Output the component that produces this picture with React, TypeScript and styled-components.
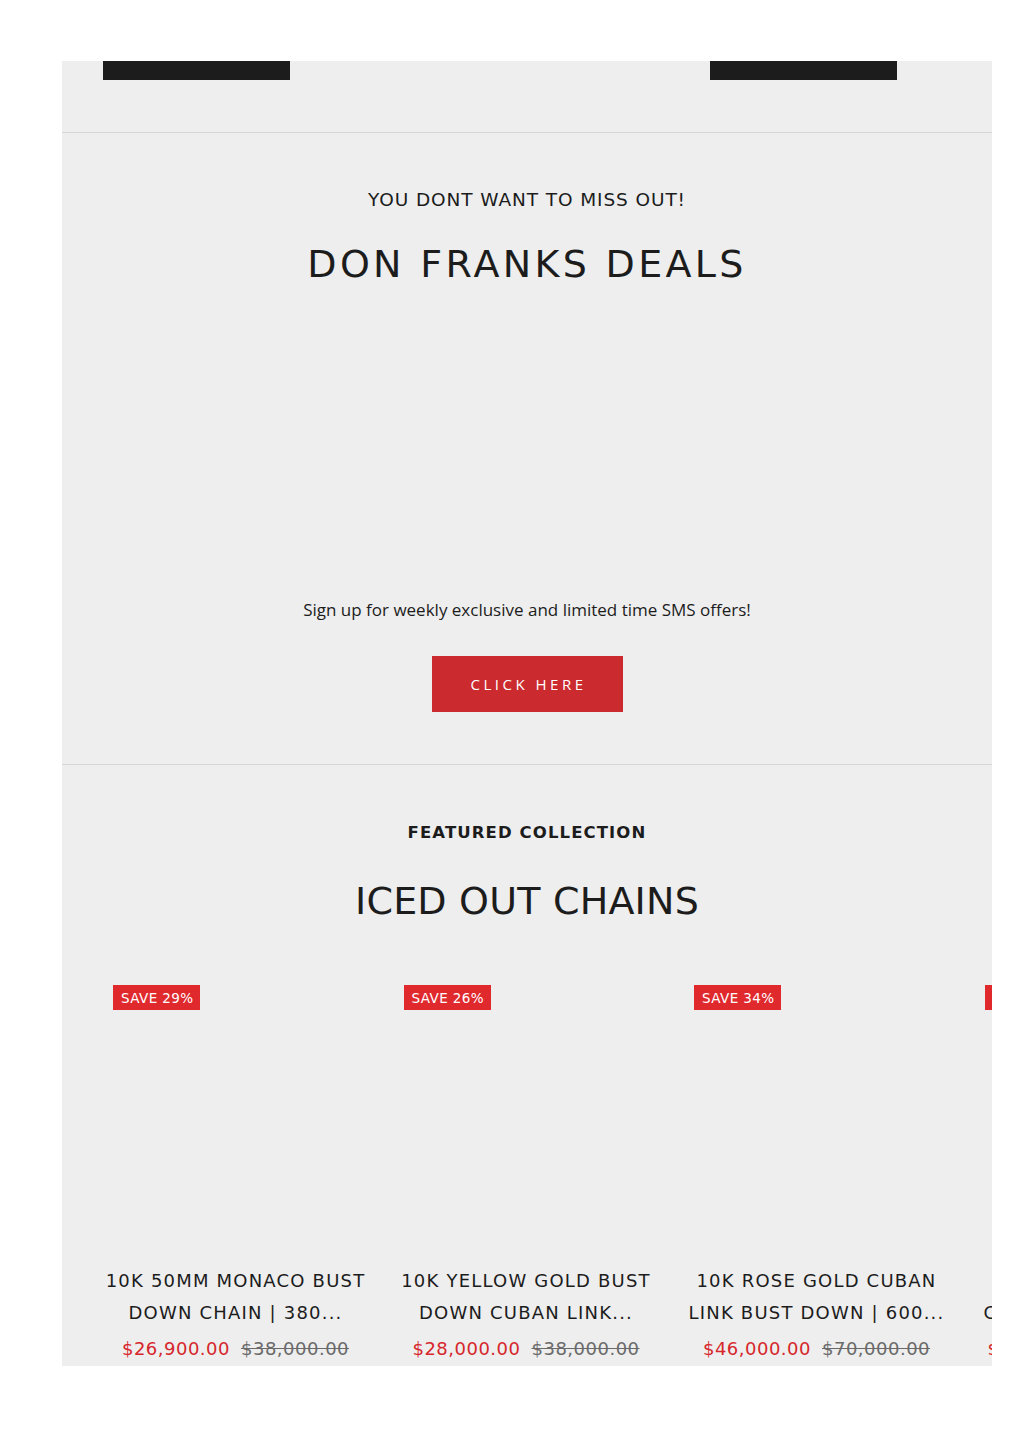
import styled, { createGlobalStyle } from 'styled-components';

const GlobalStyle = createGlobalStyle`
   html, body {
      margin: 0;
      padding: 0;
      background: #ffffff;
   }
   * {
      box-sizing: border-box;
   }
`;

interface Product {
   badge: string;
   lines: [string, string];
   price: string;
   compare: string;
}

const products: Product[] = [
   {
      badge: 'SAVE 29%',
      lines: ['10K 50MM MONACO BUST', 'DOWN CHAIN | 380...'],
      price: '$26,900.00',
      compare: '$38,000.00',
   },
   {
      badge: 'SAVE 26%',
      lines: ['10K YELLOW GOLD BUST', 'DOWN CUBAN LINK...'],
      price: '$28,000.00',
      compare: '$38,000.00',
   },
   {
      badge: 'SAVE 34%',
      lines: ['10K ROSE GOLD CUBAN', 'LINK BUST DOWN | 600...'],
      price: '$46,000.00',
      compare: '$70,000.00',
   },
   {
      badge: 'SAVE 35%',
      lines: ['14K WHITE GOLD', 'CUBAN LINK CHAIN | 1...'],
      price: '$72,000.00',
      compare: '$110,000.00',
   },
];

const App = () => {
   return (
      <>
         <GlobalStyle />
         <Page>
            <Panel>
               <ButtonStubs>
                  <Stub />
                  <Stub />
               </ButtonStubs>

               <Section>
                  <Kicker>YOU DONT WANT TO MISS OUT!</Kicker>
                  <Heading $spacing={3.3} $gap={28}>DON FRANKS DEALS</Heading>
                  <Spacer />
                  <Copy>Sign up for weekly exclusive and limited time SMS offers!</Copy>
                  <CtaButton>CLICK HERE</CtaButton>
               </Section>

               <Collection>
                  <Kicker $bold>FEATURED COLLECTION</Kicker>
                  <Heading $spacing={0.2} $gap={32}>ICED OUT CHAINS</Heading>
                  <Carousel>
                     {products.map(p => (
                        <Card key={p.lines[0]}>
                           <ImageArea>
                              <Badge>{p.badge}</Badge>
                           </ImageArea>
                           <Title>
                              <span>{p.lines[0]}</span>
                              <span>{p.lines[1]}</span>
                           </Title>
                           <Prices>
                              <Price>{p.price}</Price>
                              <Compare>{p.compare}</Compare>
                           </Prices>
                        </Card>
                     ))}
                  </Carousel>
               </Collection>
            </Panel>
         </Page>
      </>
   );
};

export default App;

const Page = styled.div`
   padding: 61px 32px 84px 62px;
`;

const Panel = styled.div`
   background: #eeeeee;
   overflow: hidden;
   font-family: 'DejaVu Sans', sans-serif;
   color: #1c1c1c;
`;

const ButtonStubs = styled.div`
   display: flex;
   gap: 420px;
   padding: 0 0 52px 41px;
   border-bottom: 1px solid #d6d6d6;
`;

const Stub = styled.div`
   width: 187px;
   height: 19px;
   background: #1c1c1c;
`;

const Section = styled.section`
   display: flex;
   flex-direction: column;
   align-items: center;
   padding: 55px 0 52px;
   border-bottom: 1px solid #d6d6d6;
`;

const Kicker = styled.p<{ $bold?: boolean }>`
   margin: 0;
   font-size: ${p => (p.$bold ? '16.5px' : '18.5px')};
   font-weight: ${p => (p.$bold ? 700 : 400)};
   letter-spacing: ${p => (p.$bold ? '1.1px' : '0.9px')};
   line-height: 24px;
`;

const Heading = styled.h2<{ $spacing: number; $gap: number }>`
   margin: ${p => p.$gap}px 0 0;
   font-size: 38px;
   font-weight: 400;
   letter-spacing: ${p => p.$spacing}px;
   line-height: 48px;
`;

const Spacer = styled.div`
   height: 310px;
`;

const Copy = styled.p`
   margin: 0;
   font-family: 'Open Sans', sans-serif;
   font-size: 17px;
   line-height: 24px;
   color: #1c1c1c;
`;

const CtaButton = styled.button`
   margin-top: 34px;
   width: 191px;
   height: 56px;
   border: none;
   background: #cb2a2e;
   color: #ffffff;
   font-family: 'Open Sans', sans-serif;
   font-size: 15px;
   letter-spacing: 3.5px;
   padding: 0 0 0 3px;
   cursor: pointer;
`;

const Collection = styled.section`
   display: flex;
   flex-direction: column;
   align-items: center;
   padding-top: 56px;
`;

const Carousel = styled.div`
   align-self: stretch;
   display: flex;
   gap: 25.5px;
   padding: 50px 0 5px 41px;
`;

const Card = styled.article`
   flex: 0 0 265px;
   display: flex;
   flex-direction: column;
   align-items: center;
`;

const ImageArea = styled.div`
   position: relative;
   width: 100%;
   height: 265px;
`;

const Badge = styled.span`
   position: absolute;
   top: 10px;
   left: 10px;
   height: 25px;
   padding: 0 7px 0 8px;
   display: flex;
   align-items: center;
   background: #e0292d;
   color: #ffffff;
   font-size: 13.5px;
   letter-spacing: 0.4px;
`;

const Title = styled.h3`
   margin: 25px 0 0;
   display: flex;
   flex-direction: column;
   align-items: center;
   font-size: 18px;
   font-weight: 400;
   letter-spacing: 1.2px;
   line-height: 32px;
   white-space: nowrap;
`;

const Prices = styled.div`
   margin-top: 8px;
   display: flex;
   gap: 11px;
   font-size: 18px;
   letter-spacing: 0.5px;
   line-height: 24px;
   white-space: nowrap;
`;

const Price = styled.span`
   color: #d6262b;
`;

const Compare = styled.span`
   color: #6a6a6a;
   text-decoration: line-through;
`;
